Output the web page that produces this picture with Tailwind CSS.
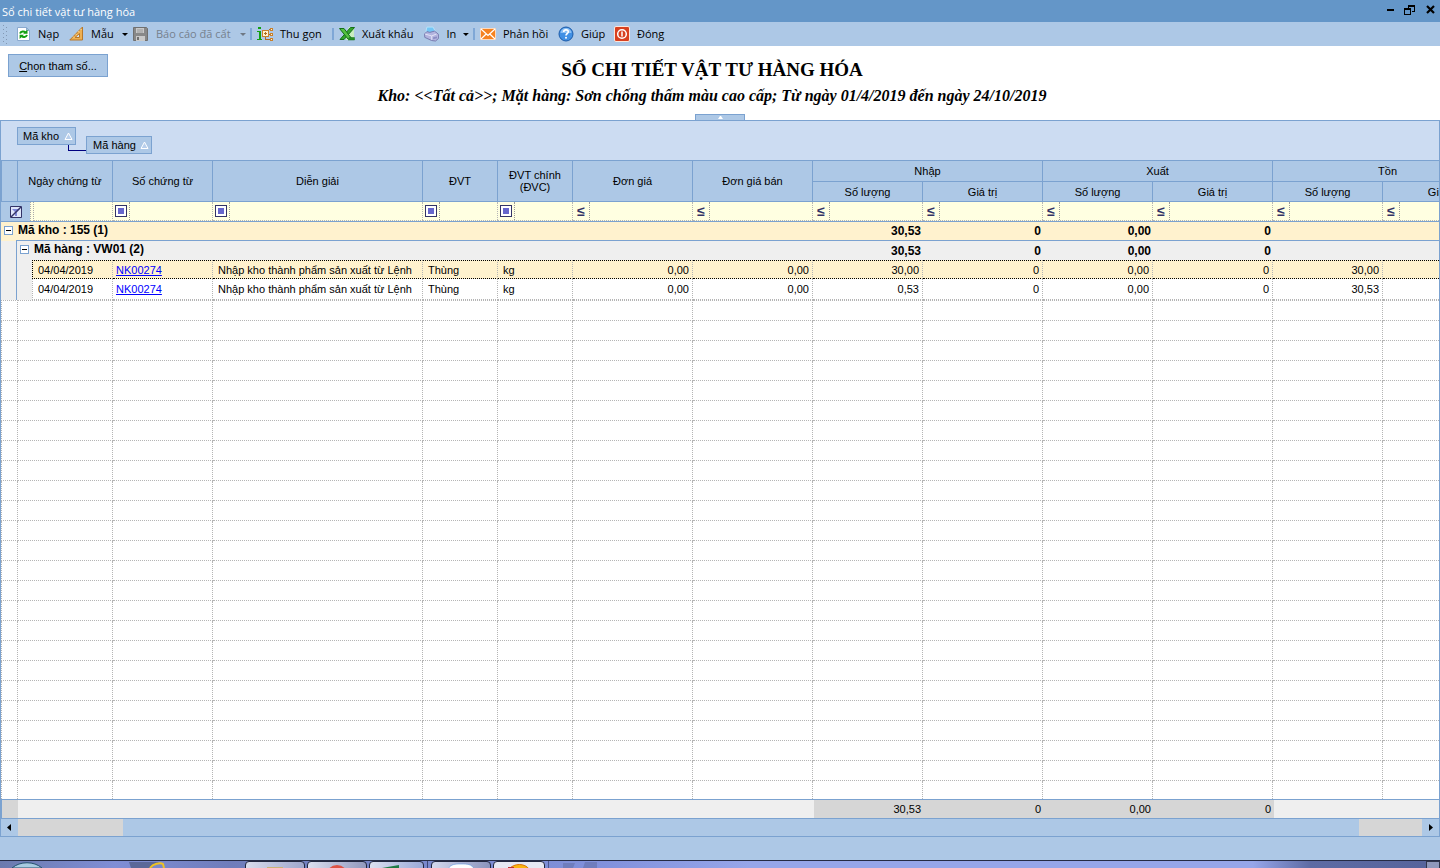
<!DOCTYPE html>
<html lang="vi">
<head>
  <meta charset="UTF-8">
  <meta name="viewport" content="width=device-width, initial-scale=1.0">
  <title>Sổ chi tiết vật tư hàng hóa</title>
  <script src="https://cdn.jsdelivr.net/npm/@tailwindcss/browser@4"></script>
</head>
<body class="h-screen flex flex-col overflow-hidden bg-[#adc8e6] font-['Liberation_Sans',Arial,sans-serif] text-[11px] leading-3 text-black">
  <!-- Title bar -->
  <header class="h-[22px] shrink-0 flex items-center justify-between bg-[#6496c8] pl-[2px] pr-1 font-['Open_Sans',sans-serif]">
    <h1 class="pt-px text-[11px] leading-4 text-white">Sổ chi tiết vật tư hàng hóa</h1>
    <div class="flex items-center gap-2">
      <button type="button" aria-label="Thu nhỏ" class="w-3 h-5"><svg class="w-3 h-5" viewBox="0 0 12 20"><path d="M3 8h7v2H3z" /></svg></button>
      <button type="button" aria-label="Khôi phục" class="w-3 h-5"><svg class="w-3 h-5" viewBox="0 0 12 20" shape-rendering="crispEdges"><path d="M4 4h7v7H8v-1h2V6H5v1H4zM0 7h7v7H0zM1 9v4h5V9z" fill-rule="evenodd" /></svg></button>
      <button type="button" aria-label="Đóng cửa sổ" class="w-3 h-5"><svg class="w-3 h-5" viewBox="0 0 12 20"><path d="M3 5l7 7M10 5l-7 7" stroke="#000" stroke-width="2.2" /></svg></button>
    </div>
  </header>

  <!-- Toolbar -->
  <nav class="h-6 shrink-0 flex items-center pl-[3px] whitespace-nowrap font-['Open_Sans',sans-serif] text-[11px] leading-4">
    <svg class="w-[5px] h-[19px] mr-2" viewBox="0 0 5 19" fill="#8398b3" shape-rendering="crispEdges"><path d="M0 0h1v1H0zM3 2h1v1H3zM0 4h1v1H0zM3 6h1v1H3zM0 8h1v1H0zM3 10h1v1H3zM0 12h1v1H0zM3 14h1v1H3zM0 16h1v1H0zM3 18h1v1H3z" /></svg>
    <button type="button" class="w-[53px] flex items-center gap-[6px]">
      <svg class="w-4 h-4" viewBox="0 0 16 16"><path d="M1.5 1.500h9l3 3v10h-12z" fill="#fff" stroke="#8aa9cf" /><path d="M10.500 1.500v3h3z" fill="#bcd2ee" stroke="#8aa9cf" /><path d="M11.500 3.500v4.200H7.200zM3.600 13V8.800h4.300z" fill="#12a012" /><path d="M4 7.500c1-2.500 4-2.600 5.500-1M11 9c-1 2.500-4 2.600-5.500 1" fill="none" stroke="#12a012" stroke-width="2" /></svg>
      Nạp
    </button>
    <button type="button" class="w-[64px] flex items-center gap-[6px]">
      <svg class="w-4 h-4" viewBox="0 0 16 16"><path d="M13.500 1v13H.8z" fill="#eeb052" stroke="#b9792a" /><path d="M10.500 7.500v4H6z" fill="#d6e3f2" stroke="#b9792a" /><path d="M4 10.500l1 1M6.500 7.800l1 1M9 5.200l1 1M11.500 3l1 1" stroke="#fbe2a8" /></svg>
      Mẫu
      <svg class="w-[6px] h-[3px] ml-auto mr-[5px]" viewBox="0 0 6 3"><path d="M0 0h6L3 3z" /></svg>
    </button>
    <button type="button" disabled class="w-[117px] flex items-center gap-[7px] text-[#76818e]">
      <svg class="w-4 h-4" viewBox="0 0 16 16"><path d="M.5 1.500h13l1 1v12H.5z" fill="#888" stroke="#707070" /><path d="M3 2h8v5H3zM3 10h9v5H3z" fill="#c9c9c9" /><path d="M4 11h2v3H4z" fill="#707070" /><path d="M4 4h6M4 6h6" stroke="#999" /></svg>
      Báo cáo đã cất
      <svg class="w-[6px] h-[3px] ml-auto mr-1" viewBox="0 0 6 3"><path d="M0 0h6L3 3z" fill="#6f7884" /></svg>
    </button>
    <span class="w-[2px] h-3 mr-[5px] bg-[#7fa7d6]"></span>
    <button type="button" class="w-[75px] flex items-center gap-[7px]">
      <svg class="w-4 h-4" viewBox="0 0 16 16" shape-rendering="crispEdges"><path d="M1 1h3v2H1zM0 5h4v8h1v1H0v-1h2V6H0z" fill="#12a012" /><path d="M5.500 4.500h6v6h-6zM13 2.500h2v2h-2zM13 7.500h2v2h-2zM13 12.500h2v2h-2z" fill="#fff2d0" stroke="#c7802c" /><path d="M8.500 6v3M7 7.500h3M12 3.500h1M12 8h1M8.500 11v2.500H13" stroke="#b06a20" fill="none" /></svg>
      Thu gọn
    </button>
    <span class="w-[2px] h-3 mr-[5px] bg-[#7fa7d6]"></span>
    <button type="button" class="w-[85px] flex items-center gap-[7px]">
      <svg class="w-4 h-4" viewBox="0 0 16 16"><path d="M6 9l4-8h5v13H7z" fill="#c9edc0" /><path d="M15.500 1.500h-4L1 13.500h4z" fill="#35a52c" stroke="#15701a" /><path d="M.5 2.500h4.500l8 10.500H9z" fill="#55c23f" stroke="#15701a" /><path d="M10 11.500h5.500v2.500H9" fill="#268e24" stroke="#15701a" stroke-width=".5" /></svg>
      Xuất khẩu
    </button>
    <button type="button" class="w-[49px] flex items-center gap-[7px]">
      <svg class="w-4 h-4" viewBox="0 0 16 16"><path d="M2 5.500L3 .8h6.500l2.500 5-6 2z" fill="#74c6f5" stroke="#b7e3fa" /><path d="M.6 8L3 5.500l3 .8 5-1.300 4.200 3.500v4L12 15.300l-4-.5-7.200-3.300z" fill="#b3b4df" stroke="#7779ae" /><path d="M1 8l7 2v4M8 10l5-2" stroke="#e3e3f6" fill="none" /><path d="M9.500 11.500l4-1v2l-4 1z" fill="#8c8ec4" /></svg>
      In
      <svg class="w-[6px] h-[3px] ml-auto mr-1" viewBox="0 0 6 3"><path d="M0 0h6L3 3z" /></svg>
    </button>
    <span class="w-[2px] h-3 mr-[5px] bg-[#7fa7d6]"></span>
    <button type="button" class="w-[78px] flex items-center gap-[7px]">
      <svg class="w-4 h-4" viewBox="0 0 16 16"><path d="M.5 2.500h15v11H.5z" fill="#f58220" stroke="#fbd9bd" /><path d="M1 3l7 6.500L15 3M1 13l5.200-5M15 13L9.800 8" fill="none" stroke="#fff" stroke-width="1.200" /></svg>
      Phản hồi
    </button>
    <button type="button" class="w-[56px] flex items-center gap-[7px]">
      <svg class="w-4 h-4" viewBox="0 0 16 16"><circle cx="8" cy="8" r="7" fill="#4190e4" stroke="#1c5ba9" /><path d="M2.500 7a5.500 5 0 0 1 11 0z" fill="#8bc0f5" /><path d="M5.700 6c.2-3 4.800-2.700 4.600 0C10.200 7.600 8 7.500 8 9.500" fill="none" stroke="#fff" stroke-width="1.600" /><circle cx="8" cy="11.700" r="1" fill="#fff" /></svg>
      Giúp
    </button>
    <button type="button" class="flex items-center gap-[7px]">
      <svg class="w-4 h-4" viewBox="0 0 16 16"><rect x=".5" y=".5" width="15" height="15" rx="1.500" fill="#d8401f" stroke="#fbe6dc" /><circle cx="8" cy="8" r="4.300" fill="none" stroke="#fff" stroke-width="1.500" /><path d="M8 5.500v5" stroke="#fff" stroke-width="1.500" /></svg>
      Đóng
    </button>
  </nav>

  <!-- Report heading -->
  <section class="relative h-[74px] shrink-0 grid grid-cols-[100px_1fr_116px] items-start px-2 pt-2 bg-white">
    <button type="button" class="h-[23px] border border-[#7ba2d0] bg-[#adc8e6] leading-4"><u>C</u>họn tham số...</button>
    <div class="text-center font-bold whitespace-nowrap font-['Liberation_Serif',serif]">
      <h2 class="pt-1 text-[19px] leading-6">SỔ CHI TIẾT VẬT TƯ HÀNG HÓA</h2>
      <p class="pt-1 text-[16px] leading-5 italic">Kho: &lt;&lt;Tất cả&gt;&gt;; Mặt hàng: Sơn chống thấm màu cao cấp; Từ ngày 01/4/2019 đến ngày 24/10/2019</p>
    </div>
    <button type="button" aria-label="Thu gọn tiêu đề" class="absolute bottom-0 left-1/2 -translate-x-1/2 w-[50px] h-[6px] flex justify-center border border-b-0 border-[#7ba2d0] bg-[#adc8e6]">
      <svg class="w-[5px] h-[3px] mt-px" viewBox="0 0 5 3"><path d="M2 0h1l2 3H0z" fill="#fff" /></svg>
    </button>
  </section>

  <!-- Grid -->
  <main class="flex-1 min-h-0 flex flex-col border border-[#7ba2d0]">
    <!-- Group-by area -->
    <div class="h-10 shrink-0 flex items-start gap-[10px] pl-4 pt-[6px] bg-[#ccdcf2] border-b border-[#7ba2d0]">
      <button type="button" class="relative h-[18px] flex items-center gap-[5px] pl-[5px] pr-[2px] border border-[#7ba2d0] bg-[#adc8e6]">
        Mã kho
        <svg class="w-[9px] h-2" viewBox="0 0 9 8"><path d="M4.500 1L8 7.500H1z" fill="#b8cfec" stroke="#fff" /></svg>
        <span class="absolute left-[50px] top-[17px] w-[18px] h-[6px] border-l border-b border-[#000080]"></span>
      </button>
      <button type="button" class="h-[18px] mt-[9px] flex items-center gap-1 pl-[6px] pr-[2px] border border-[#7ba2d0] bg-[#adc8e6]">
        Mã hàng
        <svg class="w-[9px] h-2" viewBox="0 0 9 8"><path d="M4.500 1L8 7.500H1z" fill="#b8cfec" stroke="#fff" /></svg>
      </button>
    </div>

    <div class="flex-1 min-h-0 overflow-hidden bg-white">
      <table class="w-[1502px] table-fixed border-separate border-spacing-0 whitespace-nowrap [&_td]:p-0 [&_th]:p-0 [&_th]:font-normal [&_th]:border-[#7ba2d0]">
        <colgroup>
          <col class="w-[17px]"><col class="w-[95px]"><col class="w-[100px]"><col class="w-[210px]"><col class="w-[75px]"><col class="w-[75px]"><col class="w-[120px]"><col class="w-[120px]">
          <col class="w-[110px]"><col class="w-[120px]"><col class="w-[110px]"><col class="w-[120px]"><col class="w-[110px]"><col class="w-[120px]">
        </colgroup>
        <thead class="bg-[#adc8e6]">
          <tr class="h-[21px]">
            <th rowspan="2" class="border-x border-b"></th>
            <th rowspan="2" class="border-r border-b">Ngày chứng từ</th>
            <th rowspan="2" class="border-r border-b">Số chứng từ</th>
            <th rowspan="2" class="border-r border-b">Diễn giải</th>
            <th rowspan="2" class="border-r border-b">ĐVT</th>
            <th rowspan="2" class="border-r border-b">ĐVT chính<br>(ĐVC)</th>
            <th rowspan="2" class="border-r border-b">Đơn giá</th>
            <th rowspan="2" class="border-r border-b">Đơn giá bán</th>
            <th colspan="2" class="border-r border-b">Nhập</th>
            <th colspan="2" class="border-r border-b">Xuất</th>
            <th colspan="2" class="border-r border-b">Tồn</th>
          </tr>
          <tr class="h-5">
            <th class="border-r border-b">Số lượng</th>
            <th class="border-r border-b">Giá trị</th>
            <th class="border-r border-b">Số lượng</th>
            <th class="border-r border-b">Giá trị</th>
            <th class="border-r border-b">Số lượng</th>
            <th class="border-r border-b">Giá trị</th>
          </tr>
        </thead>
        <tbody>
          <!-- Filter row, remaining cells are appended by the script below -->
          <tr id="filter-row" class="h-5 bg-[#ffffe1]">
            <td colspan="2" class="border-b border-[#7ba2d0]">
              <div class="h-[19px] flex">
                <button type="button" aria-label="Xóa bộ lọc" class="w-[29px] pl-[9px] flex items-center bg-[#adc8e6]">
                  <svg class="w-3 h-3" viewBox="0 0 12 12"><path d="M.5.5h11v11H.5z" fill="#dfe6fa" stroke="#333366" /><path d="M2 3h8L7 6v4H5V6z" fill="#7f86d8" /><path d="M1 11L11 1" stroke="#333366" stroke-width="1.500" /></svg>
                </button>
                <span class="w-1 border-l border-r border-dotted border-[#aaaaaa]"></span>
                <input type="text" aria-label="Lọc ngày chứng từ" class="flex-1 min-w-0 border-r border-b border-dotted border-[#b5b5b5]">
              </div>
            </td>
          </tr>

          <!-- Group: Mã kho -->
          <tr class="h-[19px] bg-[#fff2ce] text-[12px] font-bold [&_td]:border-[#7ba2d0]">
            <td colspan="8">
              <div class="h-[19px] flex">
                <div class="w-[15px] pt-1 pl-[3px]"><button type="button" aria-label="Thu gọn nhóm" class="w-[9px] h-[9px] flex items-center justify-center border border-[#7ba2d0] bg-white"><span class="w-[5px] h-px bg-black"></span></button></div>
                <div class="flex-1 pl-[2px] leading-[17px] border-b border-[#7ba2d0]">Mã kho : 155 (1)</div>
              </div>
            </td>
            <td class="border-b pr-[2px]! text-right">30,53</td>
            <td class="border-b pr-[2px]! text-right">0</td>
            <td class="border-b pr-[2px]! text-right">0,00</td>
            <td class="border-b pr-[2px]! text-right">0</td>
            <td class="border-b"></td>
            <td class="border-b"></td>
          </tr>
          <!-- Group: Mã hàng -->
          <tr class="h-[19px] bg-[#efefef] text-[12px] font-bold">
            <td colspan="8">
              <div class="h-[19px] flex">
                <div class="w-4 border-r border-[#7ba2d0]"></div>
                <div class="w-4 pt-1 pl-[3px]"><button type="button" aria-label="Thu gọn nhóm" class="w-[9px] h-[9px] flex items-center justify-center border border-[#7ba2d0] bg-white"><span class="w-[5px] h-px bg-black"></span></button></div>
                <div class="flex-1 pl-px leading-[17px]">Mã hàng : VW01 (2)</div>
              </div>
            </td>
            <td class="pr-[2px]! text-right">30,53</td>
            <td class="pr-[2px]! text-right">0</td>
            <td class="pr-[2px]! text-right">0,00</td>
            <td class="pr-[2px]! text-right">0</td>
            <td></td>
            <td></td>
          </tr>

          <tr class="h-[19px] bg-[#fff2ce] [&>td+td]:border-r [&>td+td]:border-y [&>td+td]:border-dotted [&>td+td]:border-y-black [&>td+td]:border-r-[#b5b5b5]">
            <td colspan="2">
              <div class="h-[19px] flex leading-[18px]">
                <div class="w-4 bg-[#efefef] border-r border-[#7ba2d0]"></div>
                <div class="w-[15px] bg-[#efefef]"></div>
                <div class="flex-1 pl-[5px] border border-dotted border-black border-r-[#b5b5b5]">04/04/2019</div>
              </div>
            </td>
            <td><a href="#NK00274" class="pl-[3px] text-[#0000ff] underline">NK00274</a></td>
            <td class="pl-[5px]! overflow-hidden">Nhập kho thành phẩm sản xuất từ Lệnh</td>
            <td class="pl-[5px]!">Thùng</td>
            <td class="pl-[5px]!">kg</td>
            <td class="pr-[3px]! text-right">0,00</td>
            <td class="pr-[3px]! text-right">0,00</td>
            <td class="pr-[3px]! text-right">30,00</td>
            <td class="pr-[3px]! text-right">0</td>
            <td class="pr-[3px]! text-right">0,00</td>
            <td class="pr-[3px]! text-right">0</td>
            <td class="pr-[3px]! text-right">30,00</td>
            <td></td>
          </tr>
          <tr class="h-[21px] bg-white [&>td+td]:border-r [&>td+td]:border-b [&>td+td]:border-dotted [&>td+td]:border-[#b5b5b5]">
            <td colspan="2">
              <div class="h-[21px] flex leading-[21px]">
                <div class="w-4 bg-[#efefef] border-r border-[#7ba2d0]"></div>
                <div class="w-[15px] bg-[#efefef]"></div>
                <div class="flex-1 pl-[5px] border border-t-0 border-dotted border-[#b5b5b5]">04/04/2019</div>
              </div>
            </td>
            <td><a href="#NK00274" class="pl-[3px] text-[#0000ff] underline">NK00274</a></td>
            <td class="pl-[5px]! overflow-hidden">Nhập kho thành phẩm sản xuất từ Lệnh</td>
            <td class="pl-[5px]!">Thùng</td>
            <td class="pl-[5px]!">kg</td>
            <td class="pr-[3px]! text-right">0,00</td>
            <td class="pr-[3px]! text-right">0,00</td>
            <td class="pr-[3px]! text-right">0,53</td>
            <td class="pr-[3px]! text-right">0</td>
            <td class="pr-[3px]! text-right">0,00</td>
            <td class="pr-[3px]! text-right">0</td>
            <td class="pr-[3px]! text-right">30,53</td>
            <td></td>
          </tr>
        </tbody>
        <tbody id="empty-rows" class="[&_td]:border-r [&_td]:border-b [&_td]:border-dotted [&_td]:border-[#b5b5b5] [&_td:first-child]:border-l [&>tr:first-child>td]:border-t"></tbody>
      </table>
    </div>

    <!-- Totals -->
    <div class="h-5 shrink-0 overflow-hidden border-y border-[#7ba2d0]">
      <table class="w-[1502px] table-fixed border-separate border-spacing-0 bg-[#efefef] [&_td]:p-0">
        <colgroup>
          <col class="w-[17px]"><col class="w-[796px]">
          <col class="w-[110px]"><col class="w-[120px]"><col class="w-[110px]"><col class="w-[120px]"><col class="w-[229px]">
        </colgroup>
        <tr class="h-[18px] text-right">
          <td class="bg-[#d6d6d6] border-l border-[#7ba2d0]"></td>
          <td></td>
          <td class="bg-[#d6d6d6] pr-[3px]!">30,53</td>
          <td class="bg-[#d6d6d6] pr-[3px]!">0</td>
          <td class="bg-[#d6d6d6] pr-[3px]!">0,00</td>
          <td class="bg-[#d6d6d6] pr-[3px]!">0</td>
          <td></td>
        </tr>
      </table>
    </div>

    <!-- Horizontal scrollbar -->
    <div class="h-[17px] shrink-0 flex">
      <button type="button" aria-label="Cuộn trái" class="w-[17px] pl-[6px]"><svg class="w-1 h-[7px]" viewBox="0 0 4 7"><path d="M4 0v7L0 3.500z" /></svg></button>
      <div class="w-[105px] bg-[#d6d6d6]"></div>
      <div class="flex-1"></div>
      <div class="w-[63px] bg-[#d6d6d6]"></div>
      <button type="button" aria-label="Cuộn phải" class="w-[17px] pl-[7px]"><svg class="w-1 h-[7px]" viewBox="0 0 4 7"><path d="M0 0v7l4-3.500z" /></svg></button>
    </div>
  </main>

  <div class="h-[23px] shrink-0"></div>

  <!-- Taskbar -->
  <footer class="h-2 shrink-0 flex overflow-hidden border-t border-[#252b45] bg-[linear-gradient(90deg,#6b7aae_0%,#7f8ed6_8%,#6f7dbb_16%,#8191dc_42%,#96a6ea_52%,#96a6ea_87%,#5d6ba4_91%,#55639b_100%)]">
    <svg class="w-[245px] h-[7px]" viewBox="0 0 245 7">
      <path d="M12 7C20 0 34 0 42 7z" fill="#a8cbe2" stroke="#24506f" />
      <path d="M129 1h30l-8 6h-20z" fill="#5b6899" />
      <path d="M150 7c3-4 10-6 13-4l1 4" fill="none" stroke="#efc321" stroke-width="2" />
    </svg>
    <div class="w-[60px] h-2 mr-[2px] flex justify-center rounded-t-sm border border-[#222840] bg-linear-to-r from-[#d9dcec] to-[#9fa7cd]"><span class="w-4 h-px mt-[5px] bg-[#cbb277]"></span></div>
    <div class="w-[60px] h-2 mr-[2px] flex justify-center rounded-t-sm border border-[#222840] bg-linear-to-r from-[#dcdff0] to-[#9299bd]"><svg class="w-[22px] h-[7px]" viewBox="0 0 22 7"><circle cx="11" cy="14" r="11" fill="#de5345" /></svg></div>
    <div class="w-[55px] h-2 rounded-t-sm border border-[#222840] bg-linear-to-r from-[#dce0f0] to-[#9ba9d8]"><svg class="w-[30px] h-[7px]" viewBox="0 0 30 7"><path d="M12 6l17-3v4H12z" fill="#1f7a45" /></svg></div>
    <span class="w-1 h-2 mr-[3px] border-r border-[#3c4674]"></span>
    <div class="w-[60px] h-2 mr-[2px] flex justify-center rounded-t-sm border border-[#222840] bg-linear-to-r from-[#d4d9ee] to-[#8b94bd]"><svg class="w-7 h-[7px]" viewBox="0 0 28 7"><path d="M1 7C4 2 8 2 14 2s11 0 13 5z" fill="#fff" stroke="#4a8de0" stroke-width=".5" /></svg></div>
    <div class="w-[52px] h-2 flex justify-center rounded-t-sm border border-[#222840] bg-[#e6e8f3]"><svg class="w-6 h-[7px]" viewBox="0 0 24 7"><path d="M2 7C7 1 18 1 22 7z" fill="#fbb50e" stroke="#d8720d" /><path d="M1 5h6v2H1z" fill="#bb3333" /></svg></div>
    <span class="w-1 h-2 border-r border-[#4c5890]"></span>
    <svg class="w-[60px] h-[7px]" viewBox="0 0 60 7"><path d="M14 2h12l-2 5H14zM36 1h12v6H34z" fill="#6f7dbd" /></svg>
    <span class="flex-1"></span>
    <span class="w-[14px] h-2 border border-[#30364c] bg-[#8f98bb]"></span>
  </footer>

  <template id="list-filter">
    <td class="border-b border-[#7ba2d0]">
      <div class="h-[19px] flex border-b border-dotted border-[#b5b5b5]">
        <button type="button" class="w-[17px] pl-[2px] flex items-center border-r border-dotted border-[#999999]"><span class="w-3 h-3 p-[2px] border border-[#333366] bg-white"><span class="block h-[6px] bg-[#6666cc]"></span></span></button>
        <input type="text" class="flex-1 min-w-0 border-r border-dotted border-[#b5b5b5]">
      </div>
    </td>
  </template>
  <template id="number-filter">
    <td class="border-b border-[#7ba2d0]">
      <div class="h-[19px] flex border-b border-dotted border-[#b5b5b5]">
        <button type="button" class="w-[17px] text-[14px] font-bold text-[#333366] border-r border-dotted border-[#999999]">≤</button>
        <input type="text" class="flex-1 min-w-0 border-r border-dotted border-[#b5b5b5]">
      </div>
    </td>
  </template>

  <script>
    const filterRow = document.getElementById('filter-row');
    const columns = ['Số chứng từ', 'Diễn giải', 'ĐVT', 'ĐVT chính', 'Đơn giá', 'Đơn giá bán', 'Nhập số lượng', 'Nhập giá trị', 'Xuất số lượng', 'Xuất giá trị', 'Tồn số lượng', 'Tồn giá trị'];
    columns.forEach((name, i) => {
      const cell = document.getElementById(i < 4 ? 'list-filter' : 'number-filter').content.cloneNode(true);
      cell.querySelector('button').setAttribute('aria-label', 'Điều kiện ' + name);
      cell.querySelector('input').setAttribute('aria-label', 'Lọc ' + name);
      filterRow.appendChild(cell);
    });

    // Pad the grid with blank rows
    const emptyRows = document.getElementById('empty-rows');
    for (let i = 0; i < 25; i++) {
      const row = emptyRows.insertRow();
      row.className = i === 0 ? 'h-[21px]' : 'h-5';
      for (let c = 0; c < 14; c++) row.insertCell();
    }
  </script>
</body>
</html>
